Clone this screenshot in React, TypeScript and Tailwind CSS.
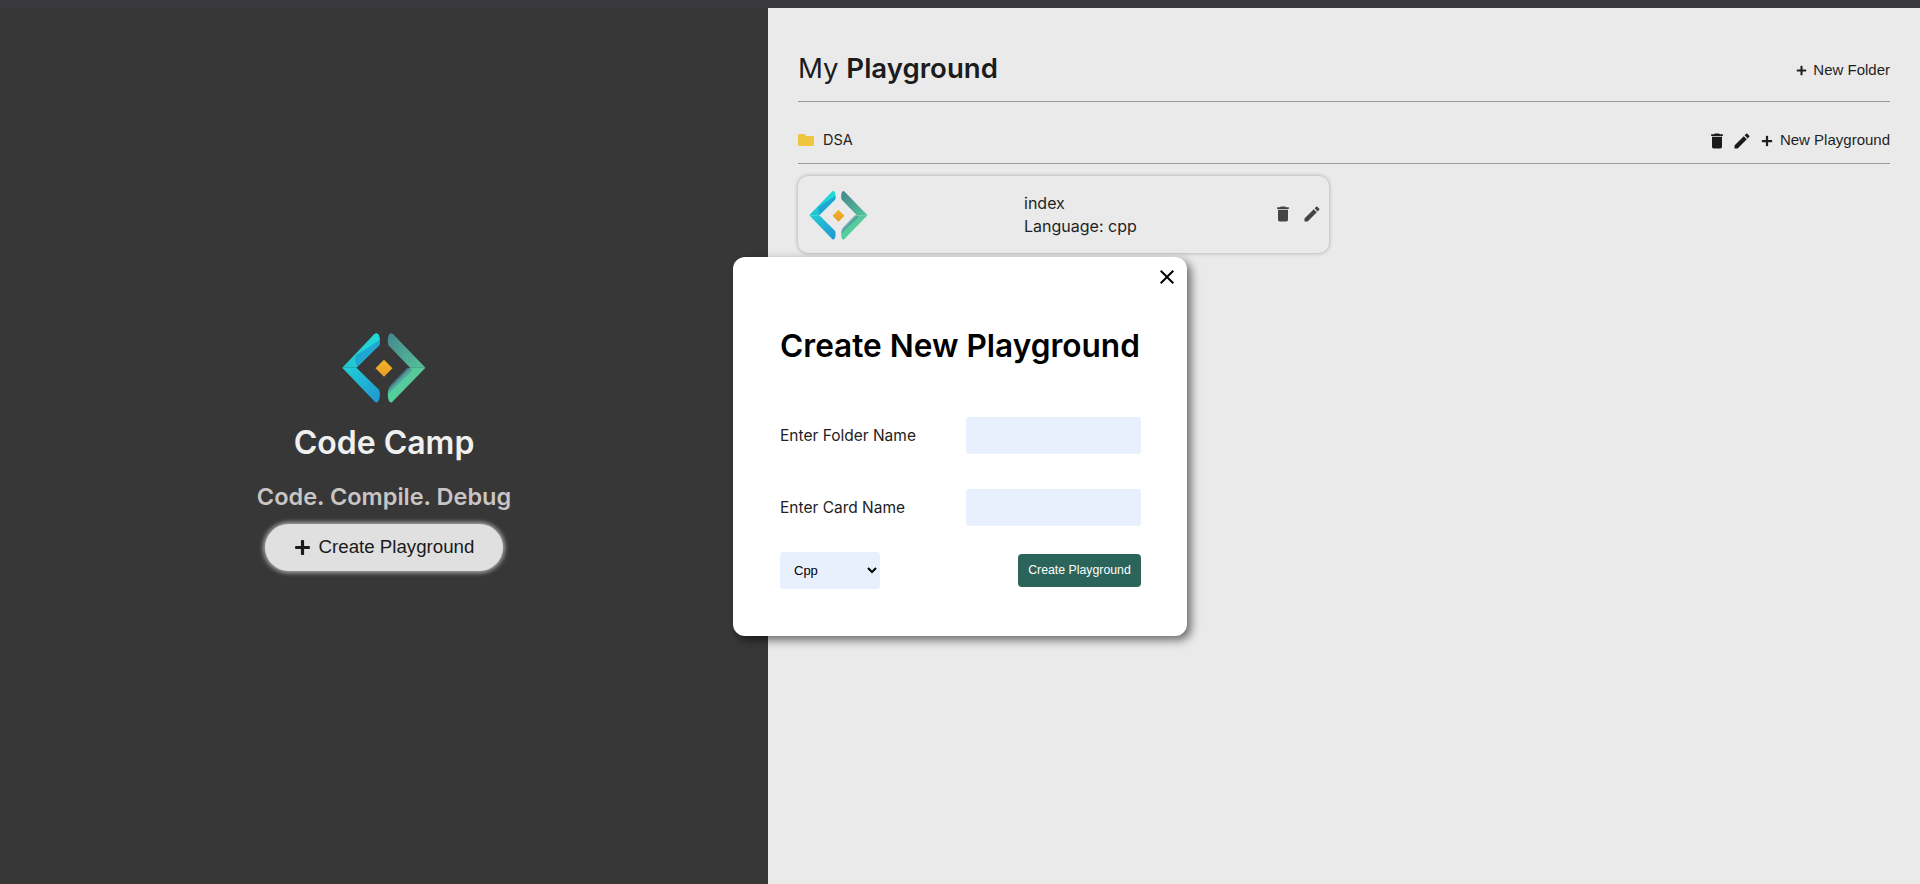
import { FaFolder, FaPlus } from 'react-icons/fa';
import { MdClose, MdDelete, MdEdit } from 'react-icons/md';

const sans = "font-['Inter',sans-serif]";
const arial = "font-['Liberation_Sans',Arial,sans-serif]";

function Logo({ className }: { className: string }) {
  return (
    <svg viewBox="38 40 246 206" className={className}>
      <defs>
        <linearGradient id="upL" x1="40" y1="140" x2="148" y2="40" gradientUnits="userSpaceOnUse">
          <stop offset="0" stopColor="#22c4cf" />
          <stop offset="1" stopColor="#20dcd8" />
        </linearGradient>
        <linearGradient id="downL" x1="40" y1="140" x2="148" y2="245" gradientUnits="userSpaceOnUse">
          <stop offset="0" stopColor="#24cfd4" />
          <stop offset="1" stopColor="#1f96d2" />
        </linearGradient>
        <linearGradient id="upR" x1="175" y1="40" x2="283" y2="142" gradientUnits="userSpaceOnUse">
          <stop offset="0" stopColor="#46868f" />
          <stop offset="1" stopColor="#55c49a" />
        </linearGradient>
        <linearGradient id="downR" x1="283" y1="142" x2="175" y2="245" gradientUnits="userSpaceOnUse">
          <stop offset="0" stopColor="#5ac59c" />
          <stop offset="1" stopColor="#52d19c" />
        </linearGradient>
        <linearGradient id="gem" x1="161" y1="120" x2="161" y2="170" gradientUnits="userSpaceOnUse">
          <stop offset="0" stopColor="#f2b52c" />
          <stop offset="1" stopColor="#e89a20" />
        </linearGradient>
      </defs>
      <path d="M38 142 L132 44 Q140 36 146 46 Q151 60 147 76 L80 142 Z" fill="url(#upL)" />
      <path d="M38 142 L80 142 L147 208 Q151 225 146 238 Q140 250 132 240 Z" fill="url(#downL)" />
      <path d="M78 106 Q100 94 148 60 Q149 70 147 76 L92 130 L82 140 Q74 124 78 106 Z" fill="#1f9fd2" opacity="0.85" />
      <path d="M283 142 L188 44 Q180 36 175 46 Q170 60 174 76 L238 142 Z" fill="url(#upR)" />
      <path d="M283 142 L238 142 L174 208 Q170 225 175 238 Q180 250 188 240 Z" fill="url(#downR)" />
      <path d="M244 150 L174 218 Q172 204 178 196 L230 142 Q244 142 244 150 Z" fill="#4f93a0" opacity="0.7" />
      <path d="M161 119 L186 144 L161 169 L136 144 Z" fill="url(#gem)" />
    </svg>
  );
}

export default function App() {
  return (
    <div className="relative flex h-[884px] flex-col overflow-hidden bg-[#eaeaea]">
      <div className="h-[8px] shrink-0 bg-[#3a383f]" />
      <div className="flex min-h-0 flex-1">
        <aside className="flex w-[768px] shrink-0 flex-col items-center bg-[#373737] pt-[325px]">
          <Logo className="h-[70px] w-[84px]" />
          <h1 className={`${sans} mt-[20px] text-[32px] leading-[40px] font-semibold whitespace-nowrap text-[#f0f0f0]`}>Code Camp</h1>
          <p className={`${sans} mt-[19px] text-[23.5px] leading-[30px] font-semibold whitespace-nowrap text-[#c9c5c5]`}>Code. Compile. Debug</p>
          <button
            type="button"
            className={`${arial} mt-[12px] flex h-[47px] w-[238px] items-center justify-center gap-[8px] rounded-full bg-[#e0e0e0] text-[18.7px] text-[#1a1a1a] shadow-[0_0_4px_2px_rgba(255,255,255,0.55)]`}
          >
            <FaPlus className="h-[17px] w-[17px]" />
            Create Playground
          </button>
        </aside>

        <main className="min-w-0 flex-1 px-[30px] pt-[40px]">
          <header className="flex h-[54px] items-center justify-between border-b border-[#9b9b9b] pb-[8px]">
            <h2 className={`${sans} mb-[4px] text-[27.6px] text-[#1c1c1c]`}>
              My <span className="font-semibold">Playground</span>
            </h2>
            <button type="button" className={`${arial} flex items-center gap-[6px] text-[15px] text-[#1f1f1f]`}>
              <FaPlus className="h-[11px] w-[11px]" />
              New Folder
            </button>
          </header>

          <div className="mt-[10px] flex h-[52px] items-center justify-between border-b border-[#9b9b9b] pt-[5px]">
            <div className={`${sans} flex items-center gap-[9px] text-[14.5px] text-[#222]`}>
              <FaFolder className="h-[16px] w-[16px] text-[#efc53f]" />
              DSA
            </div>
            <div className={`${arial} flex items-center pt-[1px] text-[15px] text-[#1f1f1f]`}>
              <MdDelete className="h-[20px] w-[20px] text-[#1a1a1a]" />
              <MdEdit className="ml-[5px] h-[20px] w-[20px] text-[#1a1a1a]" />
              <FaPlus className="mr-[7px] ml-[9px] h-[12px] w-[12px]" />
              New Playground
            </div>
          </div>

          <div className="mt-[12px] flex h-[77px] w-[531px] items-center rounded-[10px] bg-[#eaeaea] pl-[11px] pr-[7px] shadow-[0_0_4px_rgba(0,0,0,0.3)]">
            <Logo className="mt-[1px] h-[49px] w-[59px] shrink-0" />
            <div className={`${sans} ml-[156px] flex-1 text-[16px] leading-[23px] text-[#1f1f1f]`}>
              <p>index</p>
              <p>Language: cpp</p>
            </div>
            <MdDelete className="mb-[2px] h-[20px] w-[20px] text-[#444]" />
            <MdEdit className="mb-[2px] ml-[9px] h-[20px] w-[20px] text-[#444]" />
          </div>
        </main>
      </div>

      <div className="absolute top-[257px] left-[733px] h-[379px] w-[454px] rounded-[12px] bg-white pt-[66px] pr-[46px] pl-[47px] shadow-[4px_4px_10px_rgba(0,0,0,0.55)]">
        <MdClose className="absolute top-[8px] right-[8px] h-[24px] w-[24px] text-black" />
        <h3 className={`${sans} text-[31.6px] leading-[46px] font-semibold whitespace-nowrap text-black`}>Create New Playground</h3>
        <div className="mt-[48px] flex h-[37px] items-center justify-between">
          <label className={`${sans} pt-[1px] text-[15.5px] text-[#222]`}>Enter Folder Name</label>
          <input className="h-[37px] w-[175px] rounded-[3px] bg-[#e8f0fe] outline-none" />
        </div>
        <div className="mt-[35px] flex h-[37px] items-center justify-between">
          <label className={`${sans} pt-[1px] text-[15.5px] text-[#222]`}>Enter Card Name</label>
          <input className="h-[37px] w-[175px] rounded-[3px] bg-[#e8f0fe] outline-none" />
        </div>
        <div className="mt-[26px] flex h-[37px] items-center justify-between">
          <select
            defaultValue="cpp"
            className={`${arial} h-[37px] w-[100px] rounded-[3px] bg-[#e8f0fe] pl-[10px] text-[13px] text-black outline-none`}
          >
            <option value="cpp">Cpp</option>
            <option value="java">Java</option>
            <option value="python">Python</option>
          </select>
          <button
            type="button"
            className={`${arial} h-[33px] w-[123px] rounded-[4px] bg-[#2a645a] text-[12.3px] whitespace-nowrap text-white`}
          >
            Create Playground
          </button>
        </div>
      </div>
    </div>
  );
}
